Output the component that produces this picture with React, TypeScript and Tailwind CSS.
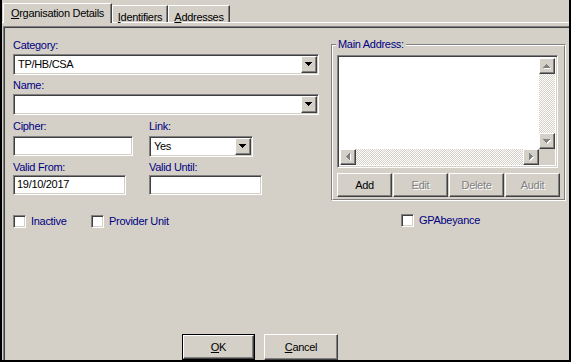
import React from 'react';

const raised =
  'border border-t-white border-l-white border-r-[#404040] border-b-[#404040] shadow-[inset_-1px_-1px_0_#808080]';
const sunken =
  'border border-t-[#808080] border-l-[#808080] border-r-white border-b-white shadow-[inset_1px_1px_0_#404040,inset_-1px_-1px_0_#d4d0c8]';
const lbl = 'block h-[13px] leading-[13px] text-[#000080] whitespace-nowrap';
const dither =
  'bg-[image:repeating-conic-gradient(#ffffff_0_25%,#d4d0c8_0_50%)] bg-[length:2px_2px]';

type Dir = 'up' | 'down' | 'left' | 'right';

const Tri: React.FC<{ dir: Dir; color?: string; disabled?: boolean }> = ({ dir, color = '#000', disabled }) => {
  const rows = [7, 5, 3, 1];
  const horiz = dir === 'left' || dir === 'right';
  const w = horiz ? 5 : 8;
  const h = horiz ? 8 : 5;
  const rects = (fill: string, off: number) =>
    rows.map((len, i) => {
      const idx = dir === 'down' || dir === 'right' ? i : 3 - i;
      const start = i;
      return horiz ? (
        <rect key={fill + i} x={idx + off} y={start + off} width={1} height={len} fill={fill} />
      ) : (
        <rect key={fill + i} x={start + off} y={idx + off} width={len} height={1} fill={fill} />
      );
    });
  return (
    <svg width={w} height={h} shapeRendering="crispEdges">
      {disabled && rects('#ffffff', 1)}
      {rects(disabled ? '#808080' : color, 0)}
    </svg>
  );
};

const Combo: React.FC<{ value?: string; className?: string }> = ({ value, className = '' }) => (
  <div className={`${sunken} bg-white h-[21px] flex items-stretch p-px ${className}`}>
    <div className="flex-1 pl-[3px] leading-[17px] text-black">{value}</div>
    <div className={`${raised} w-[16px] bg-[#d4d0c8] flex items-center justify-center`}>
      <Tri dir="down" />
    </div>
  </div>
);

const Field: React.FC<{ value?: string; className?: string }> = ({ value, className = '' }) => (
  <div className={`${sunken} bg-white h-[20px] pl-[3px] leading-[17px] text-black ${className}`}>{value}</div>
);

const Check: React.FC<{ label: string; className?: string }> = ({ label, className = '' }) => (
  <div className={`flex items-center ${className}`}>
    <div className={`${sunken} w-[13px] h-[13px] bg-white`} />
    <span className="ml-[5px] text-[#000080]">{label}</span>
  </div>
);

const Btn: React.FC<{ children: React.ReactNode; disabled?: boolean; className?: string }> = ({
  children,
  disabled,
  className = '',
}) => (
  <div
    className={`${raised} bg-[#d4d0c8] flex items-center justify-center ${
      disabled ? 'text-[#808080] [text-shadow:1px_1px_0_#ffffff]' : 'text-black'
    } ${className}`}
  >
    {children}
  </div>
);

const ScrollBtn: React.FC<{ dir: Dir }> = ({ dir }) => (
  <div className={`${raised} w-[16px] h-[16px] bg-[#d4d0c8] flex items-center justify-center`}>
    <Tri dir={dir} disabled />
  </div>
);

export default function App() {
  return (
    <div className="w-[571px] h-[362px] bg-[#d4d0c8] border-l-2 border-r-2 border-b-2 border-black flex flex-col font-['Liberation_Sans',Arial,sans-serif] text-[11px] tracking-[-0.3px] text-black select-none">
      {/* tab strip */}
      <div className="flex items-end h-[23px] pl-px border-b border-white">
        <div className="relative z-10 -mb-px h-[20px] w-[109px] bg-[#d4d0c8] border-t border-l border-white border-r border-r-[#404040] shadow-[inset_-1px_0_0_#808080] flex justify-center pt-px">
          <span>
            <u>O</u>rganisation Details
          </span>
        </div>
        <div className="h-[17px] w-[56px] border-t border-l border-white border-r border-r-[#404040] shadow-[inset_-1px_0_0_#808080] flex justify-center pt-[3px]">
          <span>
            <u>I</u>dentifiers
          </span>
        </div>
        <div className="h-[17px] w-[62px] border-t border-l border-white border-r border-r-[#404040] shadow-[inset_-1px_0_0_#808080] flex justify-center pt-[3px]">
          <span>
            <u>A</u>ddresses
          </span>
        </div>
      </div>

      {/* page */}
      <div className="flex-1 flex pl-px pt-[3px]">
        <div className="flex-1 flex border-t border-l border-[#808080]">
          <div className="flex-1 flex flex-col border-t border-l border-[#404040]">
            <div className="flex pl-[8px]">
              {/* left column */}
              <div className="w-[306px] pt-[11px] flex flex-col">
                <span className={lbl}>Category:</span>
                <Combo value="TP/HB/CSA" className="mt-[2px]" />
                <span className={`${lbl} mt-[4px]`}>Name:</span>
                <Combo className="mt-[2px]" />
                <div className="flex mt-[5px]">
                  <div className="w-[136px]">
                    <span className={lbl}>Cipher:</span>
                    <Field className="mt-[3px] w-[120px]" />
                  </div>
                  <div>
                    <span className={lbl}>Link:</span>
                    <Combo value="Yes" className="mt-[3px] w-[104px]" />
                  </div>
                </div>
                <div className="flex mt-[4px]">
                  <div className="w-[136px]">
                    <span className={lbl}>Valid From:</span>
                    <Field value="19/10/2017" className="mt-px w-[113px]" />
                  </div>
                  <div>
                    <span className={lbl}>Valid Until:</span>
                    <Field className="mt-px w-[113px]" />
                  </div>
                </div>
                <div className="flex mt-[18px]">
                  <Check label="Inactive" className="w-[78px]" />
                  <Check label="Provider Unit" />
                </div>
              </div>

              {/* right column */}
              <div className="ml-[12px] pt-[16px]">
                <div className="relative w-[235px] border border-t-[#808080] border-l-[#808080] border-r-white border-b-white">
                  <div className="border border-t-white border-l-white border-r-[#808080] border-b-[#808080] pl-[4px] pt-[9px] pb-[2px]">
                    <div className={`${sunken} w-[221px] h-[113px] bg-white p-[2px]`}>
                      <div className="grid grid-cols-[1fr_16px] grid-rows-[1fr_16px] h-full">
                        <div className="bg-white" />
                        <div className={`flex flex-col ${dither}`}>
                          <ScrollBtn dir="up" />
                          <div className="flex-1" />
                          <ScrollBtn dir="down" />
                        </div>
                        <div className={`flex ${dither}`}>
                          <ScrollBtn dir="left" />
                          <div className="flex-1" />
                          <ScrollBtn dir="right" />
                        </div>
                        <div className="bg-[#d4d0c8]" />
                      </div>
                    </div>
                    <div className="flex gap-px mt-[5px]">
                      <Btn className="w-[55px] h-[24px]">Add</Btn>
                      <Btn disabled className="w-[55px] h-[24px]">Edit</Btn>
                      <Btn disabled className="w-[55px] h-[24px]">Delete</Btn>
                      <Btn disabled className="w-[55px] h-[24px]">Audit</Btn>
                    </div>
                  </div>
                  <span className={`${lbl} absolute -top-[7px] left-[4px] px-[2px] bg-[#d4d0c8]`}>Main Address:</span>
                </div>
                <Check label="GPAbeyance" className="mt-[11px] pl-[70px]" />
              </div>
            </div>

            <div className="flex-1" />

            <div className="flex gap-[9px] pl-[177px]">
              <div className="border border-black w-[73px] h-[26px] flex">
                <Btn className="flex-1">
                  <span>
                    <u>O</u>K
                  </span>
                </Btn>
              </div>
              <Btn className="w-[74px] h-[26px]">
                <span>
                  <u>C</u>ancel
                </span>
              </Btn>
            </div>
          </div>
        </div>
      </div>
    </div>
  );
}
